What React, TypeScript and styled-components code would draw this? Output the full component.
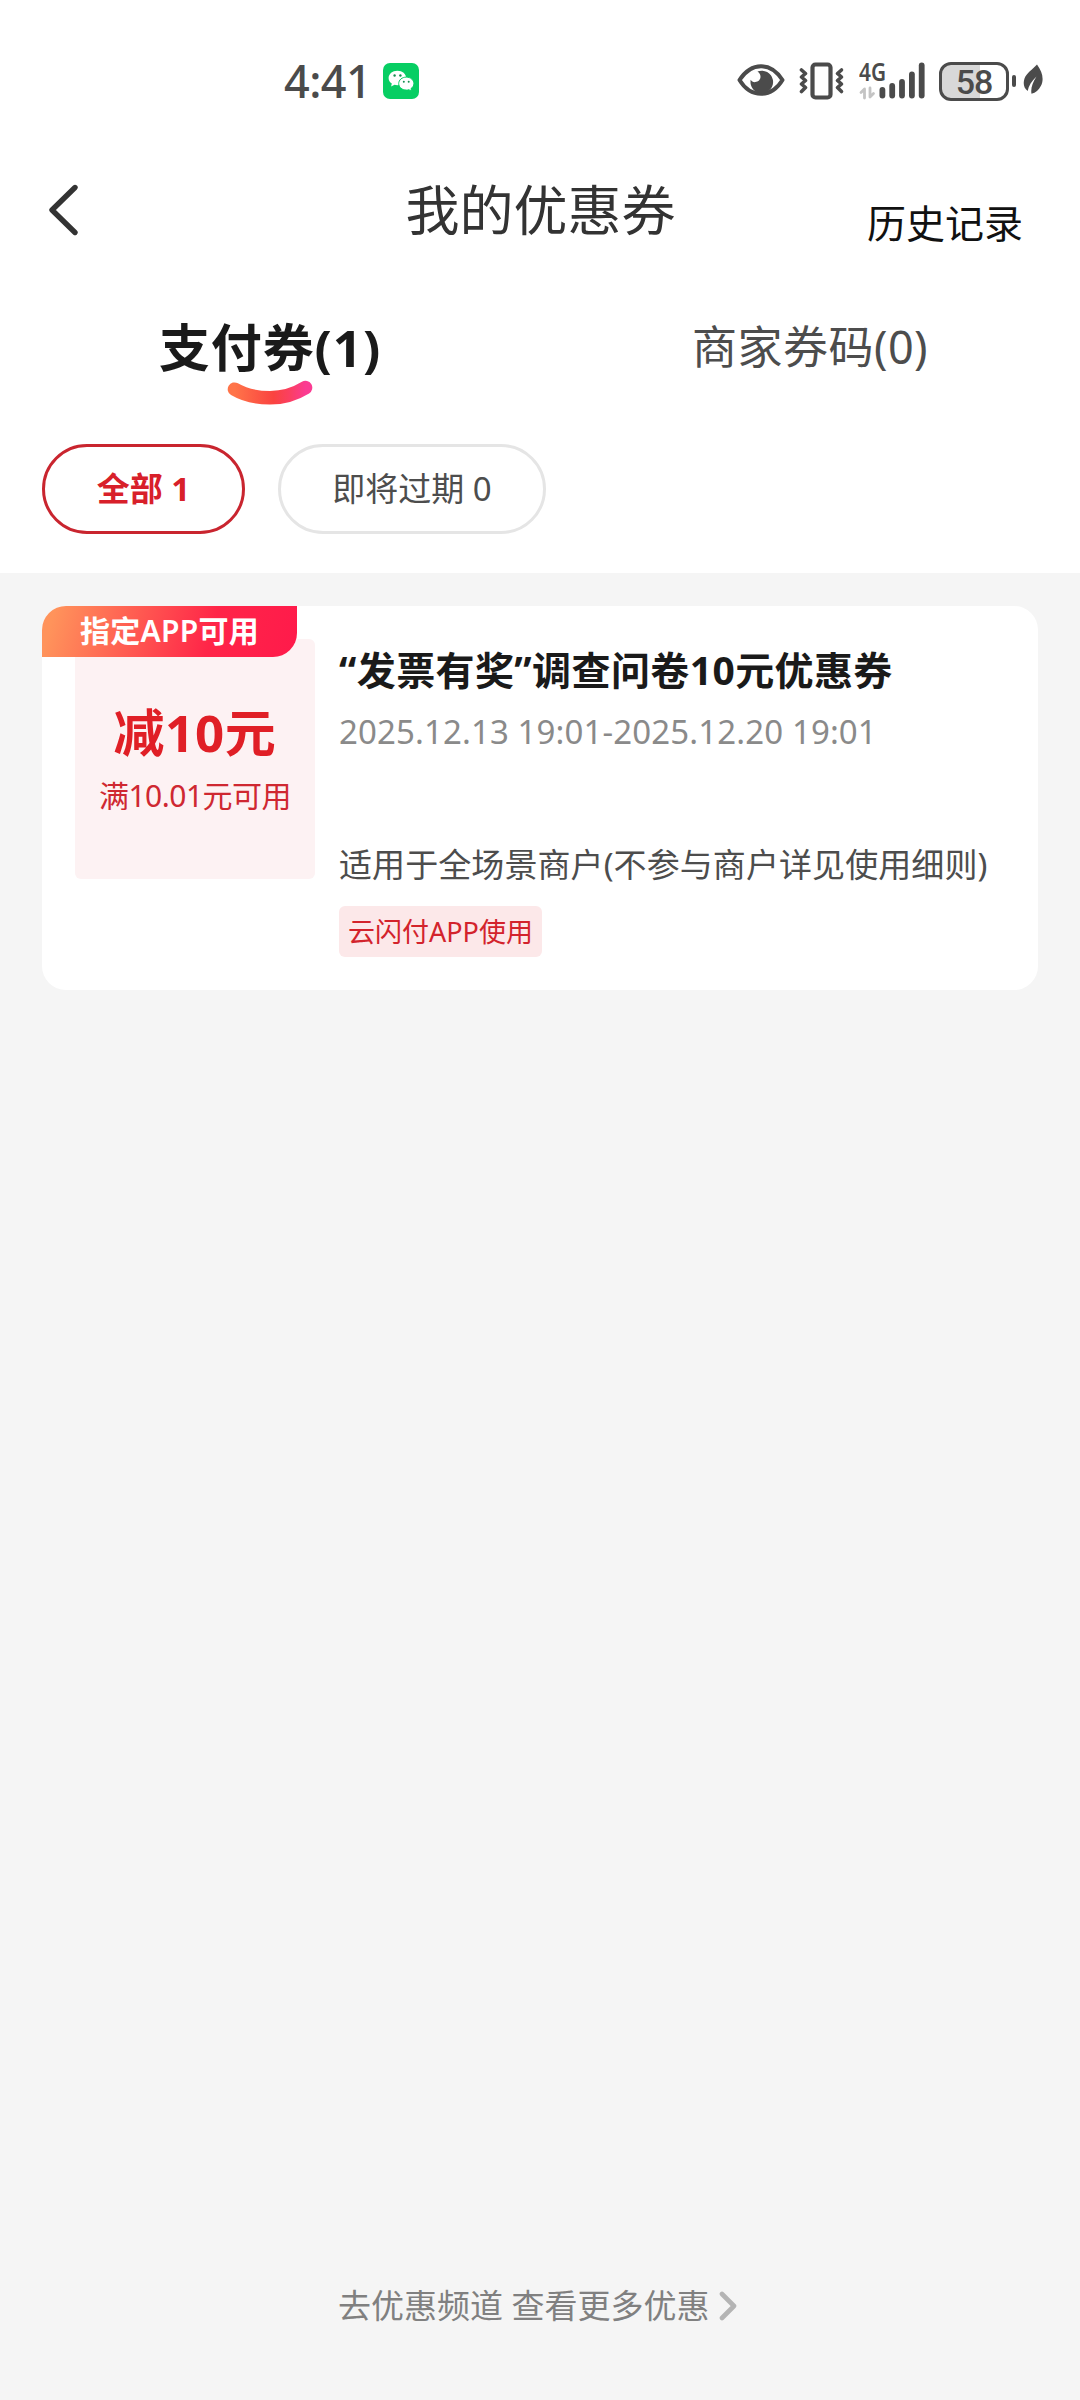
import React from "react";
import styled, { createGlobalStyle } from "styled-components";

const GlobalStyle = createGlobalStyle`
  * { box-sizing: border-box; }
  body {
    margin: 0;
    background: #f5f5f5;
    font-family: "Noto Sans", "Noto Sans CJK SC", sans-serif;
  }
  svg { display: block; flex: none; }
`;

const Page = styled.div`
  width: 1080px;
  height: 2400px;
  display: flex;
  flex-direction: column;
  background: #f5f5f5;
`;

const Top = styled.div`
  height: 573px;
  background: #fff;
`;

const StatusBar = styled.div`
  height: 120px;
  padding: 42px 36px 0 284px;
  display: flex;
  align-items: center;
  color: #4b4b4b;
`;

const Clock = styled.span`
  width: 99px;
  padding-bottom: 1px;
  font-size: 45px;
  line-height: 60px;
  font-weight: 500;
  letter-spacing: -0.6px;
`;

const StatusIcons = styled.div`
  margin-left: auto;
  display: flex;
  align-items: center;
`;

const IconGroup = styled.div`
  display: flex;
  align-items: center;
  gap: 14px;
`;

const BatteryBody = styled.div`
  width: 70px;
  height: 39px;
  margin-left: 14px;
  border: 3px solid #4b4b4b;
  border-radius: 12px;
  background: linear-gradient(90deg, #d8d8d8 60%, #fff 60%);
  font-family: Roboto, "Noto Sans", sans-serif;
  font-size: 34px;
  line-height: 34px;
  font-weight: 500;
  letter-spacing: -1px;
  text-align: center;
`;

const BatteryNub = styled.div`
  width: 4px;
  height: 12px;
  margin: 0 7px 0 3px;
  border-radius: 2px;
  background: #4b4b4b;
`;

const Header = styled.header`
  height: 180px;
  padding: 0 57px 0 46px;
  display: grid;
  grid-template-columns: 1fr 270px 1fr;
  align-items: center;
`;

const PageTitle = styled.h1`
  margin: 0 -6px 0 6px;
  font-size: 54px;
  line-height: 72px;
  font-weight: 400;
  color: #333;
  white-space: nowrap;
`;

const History = styled.a`
  padding-top: 26px;
  text-align: right;
  font-size: 39px;
  line-height: 54px;
  color: #111;
`;

const Tabs = styled.nav`
  height: 144px;
  display: grid;
  grid-template-columns: 1fr 1fr;
`;

const Tab = styled.div<{ $active?: boolean }>`
  padding-top: 17px;
  display: flex;
  flex-direction: column;
  align-items: center;
  gap: 3px;
  font-size: ${(p) => (p.$active ? 51 : 45)}px;
  font-weight: ${(p) => (p.$active ? 700 : 400)};
  letter-spacing: ${(p) => (p.$active ? 0.9 : 0.5)}px;
  line-height: 60px;
  color: ${(p) => (p.$active ? "#1a1a1a" : "#4d4d4d")};
`;

const Filters = styled.div`
  padding-left: 42px;
  display: flex;
  gap: 33px;
`;

const Pill = styled.button<{ $active?: boolean; $w: number }>`
  width: ${(p) => p.$w}px;
  height: 90px;
  padding: 0;
  border: 3px solid ${(p) => (p.$active ? "#c9252f" : "#e5e5e5")};
  border-radius: 45px;
  background: #fff;
  font-family: inherit;
  font-size: 33px;
  line-height: 48px;
  font-weight: ${(p) => (p.$active ? 700 : 400)};
  color: ${(p) => (p.$active ? "#d8202a" : "#4d4d4d")};
`;

const Card = styled.article`
  position: relative;
  height: 384px;
  margin: 33px 42px 0;
  padding: 33px;
  display: flex;
  gap: 24px;
  border-radius: 24px;
  background: #fff;
`;

const Ribbon = styled.div`
  position: absolute;
  left: 0;
  top: 0;
  width: 255px;
  height: 51px;
  border-radius: 24px 0 24px 0;
  background: linear-gradient(105deg, #ff935b 5%, #ff2548 66%, #ff1a4b);
  color: #fff;
  font-size: 30px;
  line-height: 50px;
  font-weight: 600;
  letter-spacing: 0.3px;
  text-align: center;
`;

const Face = styled.div`
  width: 240px;
  height: 240px;
  padding-top: 60px;
  display: flex;
  flex-direction: column;
  align-items: center;
  border-radius: 6px;
  background: #fdf2f3;
`;

const Amount = styled.strong`
  font-size: 51px;
  line-height: 66px;
  font-weight: 700;
  letter-spacing: 0.7px;
  color: #e01f26;
`;

const Condition = styled.span`
  margin-top: 10px;
  font-size: 30px;
  line-height: 42px;
  letter-spacing: -0.5px;
  color: #cf2831;
  white-space: nowrap;
`;

const Details = styled.div`
  flex: 1;
  padding-top: 4px;
  display: flex;
  flex-direction: column;
  align-items: flex-start;
  white-space: nowrap;
`;

const CouponTitle = styled.h2`
  margin: 0;
  font-size: 39px;
  line-height: 54px;
  font-weight: 700;
  letter-spacing: 0.4px;
  color: #1a1a1a;
`;

const Period = styled.time`
  margin-top: 12px;
  font-size: 33px;
  line-height: 46px;
  letter-spacing: 0.12px;
  color: #8a8a8a;
`;

const Scope = styled.p`
  margin: 87px 0 0;
  font-size: 33px;
  line-height: 46px;
  letter-spacing: 0.08px;
  color: #4d4d4d;
`;

const Tag = styled.span`
  height: 51px;
  margin-top: 18px;
  padding: 0 9px;
  border-radius: 6px;
  background: #fce8e9;
  font-size: 27px;
  line-height: 51px;
  color: #d3232c;
`;

const More = styled.a`
  margin-top: auto;
  height: 118px;
  padding-left: 338px;
  display: flex;
  align-items: flex-start;
  gap: 9px;
  font-size: 33px;
  line-height: 48px;
  color: #808080;
`;

const MoreArrow = styled.span`
  height: 48px;
  display: flex;
  align-items: center;
`;

const WeChatIcon = () => (
  <svg width="36" height="36" viewBox="0 0 36 36">
    <rect width="36" height="36" rx="7" fill="#07ce63" />
    <path
      d="M14.4 7.8c-5 0-8.8 3.2-8.8 7.2 0 2.3 1.200 4.300 3.200 5.600l-.7 2.900 3.400-1.700c.9.2 1.900.4 2.900.4 5 0 8.800-3.200 8.800-7.200s-3.800-7.200-8.800-7.200z"
      fill="#fff"
    />
    <path
      d="M23.300 14.100c-4.300 0-7.600 2.900-7.600 6.500s3.300 6.500 7.600 6.500c.9 0 1.700-.1 2.500-.4l2.800 1.500-.6-2.600c1.800-1.200 2.900-3 2.900-5 0-3.600-3.300-6.500-7.600-6.500z"
      fill="#fff"
      stroke="#07ce63"
      strokeWidth="1"
    />
    <g fill="#168f50">
      <circle cx="11.600" cy="12.500" r="1.200" />
      <circle cx="17.400" cy="12.500" r="1.200" />
      <circle cx="20.800" cy="18.800" r="1" />
      <circle cx="25.700" cy="18.800" r="1" />
    </g>
  </svg>
);

const EyeIcon = () => (
  <svg width="48" height="34" viewBox="0 0 48 34">
    <path
      d="M2.500 16C8 7.500 15.500 2.200 24 2.200S40 7.500 45.500 16c-5.500 9-13 13.800-21.500 13.800S8 25 2.500 16z"
      fill="none"
      stroke="#4b4b4b"
      strokeWidth="4"
      strokeLinejoin="round"
    />
    <path
      d="M20.500 7.500a11.300 11.300 0 1 1-6.800 8.300c1 1.700 2.600 2.500 4.600 2.300 3-.3 5.200-2.400 5.200-5.300 0-2.400-1.200-4.200-3-5.300z"
      fill="#4b4b4b"
    />
  </svg>
);

const VibrateIcon = () => (
  <svg width="46" height="38" viewBox="0 0 46 38" fill="none" stroke="#4b4b4b" strokeLinecap="round" strokeLinejoin="round">
    <rect x="13.500" y="2.500" width="18" height="33" rx="3" strokeWidth="4.200" />
    <path d="M2.500 8l4 3.500-4 3.500 4 3.500-4 3.500 4 3.500L2.500 29.500" strokeWidth="3.600" />
    <path d="M42.500 8l-4 3.500 4 3.500-4 3.500 4 3.500-4 3.500 4 4" strokeWidth="3.600" />
  </svg>
);

const SignalIcon = () => (
  <svg width="66" height="54" viewBox="0 -8 66 54">
    <text
      x="0"
      y="18.500"
      fontFamily="Noto Sans, sans-serif"
      fontSize="24.500"
      fontWeight="600"
      fill="#4b4b4b"
      textLength="27"
      lengthAdjust="spacingAndGlyphs"
    >
      4G
    </text>
    <g stroke="#c4c4c4" strokeWidth="2.800" fill="none" strokeLinecap="round" strokeLinejoin="round">
      <path d="M5.500 36V27L2 30.500" />
      <path d="M11 26v9l3.500-3.500" />
    </g>
    <g fill="#4b4b4b">
      <rect x="20.500" y="25" width="5.800" height="11.500" rx="2.900" />
      <rect x="30.300" y="21" width="5.800" height="15.500" rx="2.900" />
      <rect x="40.100" y="17" width="5.800" height="19.500" rx="2.900" />
      <rect x="50" y="9.500" width="5.800" height="27" rx="2.900" />
      <rect x="59.800" y="0.500" width="5.800" height="36" rx="2.900" />
    </g>
  </svg>
);

const LeafIcon = () => (
  <svg width="21" height="34" viewBox="0 1 21 34">
    <path
      d="M14 1.500c5.500 7.500 7.300 15 3.800 21.500-2 4-5 7-9.300 7.800-1-5 1-11.500 5-17.300C8.700 18 5.500 23 4.700 28 .5 25 0 20 1.500 15.500 3.500 10 9.500 6.500 14 1.500z"
      fill="#4b4b4b"
    />
  </svg>
);

const BackIcon = () => (
  <svg width="34" height="54" viewBox="0 0 34 54">
    <path d="M29 4.500L6 27l23 22.500" fill="none" stroke="#333" strokeWidth="5.400" strokeLinecap="round" strokeLinejoin="round" />
  </svg>
);

const Smile = () => (
  <svg width="86" height="26" viewBox="0 0 86 26">
    <defs>
      <linearGradient id="smile" x1="0" x2="1" y1="0" y2="0">
        <stop offset="0" stopColor="#ff7449" />
        <stop offset="0.550" stopColor="#fa4340" />
        <stop offset="0.780" stopColor="#fb3f62" />
        <stop offset="1" stopColor="#fb3b92" />
      </linearGradient>
    </defs>
    <path
      d="M7.500 9.200Q22 17.800 43 17.800 62 17.800 78.500 7.600"
      fill="none"
      stroke="url(#smile)"
      strokeWidth="13.600"
      strokeLinecap="round"
    />
  </svg>
);

export default function App() {
  return (
    <Page>
      <GlobalStyle />
      <Top>
        <StatusBar>
          <Clock>4:41</Clock>
          <WeChatIcon />
          <StatusIcons>
            <IconGroup>
              <EyeIcon />
              <VibrateIcon />
              <SignalIcon />
            </IconGroup>
            <BatteryBody>58</BatteryBody>
            <BatteryNub />
            <LeafIcon />
          </StatusIcons>
        </StatusBar>
        <Header>
          <BackIcon />
          <PageTitle>我的优惠券</PageTitle>
          <History>历史记录</History>
        </Header>
        <Tabs>
          <Tab $active>
            支付券(1)
            <Smile />
          </Tab>
          <Tab>商家券码(0)</Tab>
        </Tabs>
        <Filters>
          <Pill $active $w={203}>全部 1</Pill>
          <Pill $w={268}>即将过期 0</Pill>
        </Filters>
      </Top>
      <Card>
        <Face>
          <Amount>减10元</Amount>
          <Condition>满10.01元可用</Condition>
        </Face>
        <Details>
          <CouponTitle>“发票有奖”调查问卷10元优惠券</CouponTitle>
          <Period>2025.12.13 19:01-2025.12.20 19:01</Period>
          <Scope>适用于全场景商户(不参与商户详见使用细则)</Scope>
          <Tag>云闪付APP使用</Tag>
        </Details>
        <Ribbon>指定APP可用</Ribbon>
      </Card>
      <More>
        去优惠频道 查看更多优惠
        <MoreArrow>
          <svg width="20" height="32" viewBox="0 0 20 32">
            <path d="M3 4l12 12L3 28" fill="none" stroke="#b4b4b4" strokeWidth="4.600" strokeLinecap="round" strokeLinejoin="round" />
          </svg>
        </MoreArrow>
      </More>
    </Page>
  );
}
